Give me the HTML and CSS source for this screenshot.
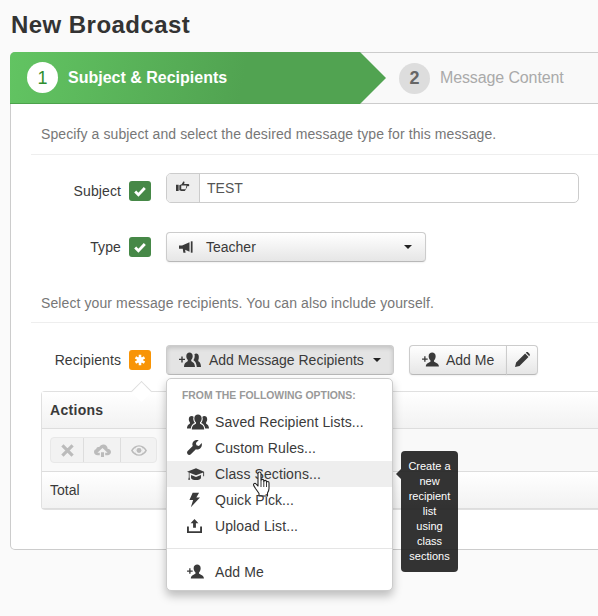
FILE: index.html
```html
<!DOCTYPE html>
<html lang="en">
<head>
<meta charset="utf-8">
<title>New Broadcast</title>
<link rel="stylesheet" href="styles.css">
</head>
<body>
<svg class="defs" width="0" height="0" aria-hidden="true">
  <symbol id="i-check" viewBox="0 0 16 16"><path d="M2.500 8.500l3.700 3.700 7.300-7.600" fill="none" stroke="currentColor" stroke-width="3.200"/></symbol>
  <symbol id="i-star" viewBox="0 0 16 16"><g stroke="currentColor" stroke-width="3.400"><path d="M8 1v14M2 4.500l12 7M14 4.500l-12 7"/></g><circle cx="8" cy="8" r="4" fill="currentColor"/></symbol>
  <symbol id="i-hand" viewBox="0 0 16 16"><path d="M0 5.500h3v7H0zM3.800 6l2.700-1.200L8 2.300c.7-.9 1.800-.4 1.700.7L9.200 4.600h4.800c1.600 0 1.600 2.600 0 2.600h-1.500c.5 1.200-.1 1.800-.7 2 .2 1-.3 1.700-1 1.800 0 1.100-.8 1.600-1.700 1.600H7c-1.300 0-2-.8-3.200-.9z" fill="currentColor"/><path d="M6 6.400h6l-1 4.200H6z" fill="#f0f0f0"/></symbol>
  <symbol id="i-horn" viewBox="0 0 16 16"><path d="M0 6.200h3.500L12 2.500v11L7 11.200l.5 3.300H5L4.300 10H0z" fill="currentColor"/><path d="M13.500 1.500h2v13h-2z" fill="currentColor"/></symbol>
  <symbol id="i-caret" viewBox="0 0 8 4"><path d="M0 0h8L4 4z" fill="currentColor"/></symbol>
  <symbol id="i-group" viewBox="0 0 22 16"><g fill="currentColor"><path d="M7.300 4.200C7.300 1.700 9 .4 11 .4s3.700 1.300 3.700 3.800c0 1.900-.7 3.400-1.700 4.100v1.200c0 .7 4.200 1 4.200 5.900H4.800c0-4.900 4.200-5.200 4.200-5.900V8.300c-1-.7-1.700-2.200-1.700-4.100z"/><path d="M1.800 5.300C1.800 3.200 3.100 2.100 4.700 2.100c.9 0 1.500.3 2 .8-.3.500-.4 1-.4 1.500 0 1.700.6 3.500 1.500 4.300 0 .5-3.400 1.100-4 5.800H0c0-3.900 2.900-4.400 2.900-5V8.400c-.6-.6-1.100-1.700-1.100-3.100z"/><path d="M20.200 5.300c0-2.100-1.300-3.200-2.900-3.200-.9 0-1.500.3-2 .8.300.5.400 1 .4 1.500 0 1.700-.6 3.500-1.500 4.300 0 .5 3.400 1.100 4 5.800H22c0-3.900-2.900-4.400-2.900-5V8.400c.6-.6 1.100-1.700 1.100-3.100z"/></g></symbol>
  <symbol id="i-group-add" viewBox="0 0 22 16"><g fill="currentColor"><path d="M0 6.700h2.300V4.400h1.400v2.300H6v1.400H3.700v2.300H2.300V8.100H0z"/><path d="M7.300 3.900C7.300 1.600 8.800.4 10.500.4s3.200 1.200 3.200 3.500c0 1.800-.6 3.200-1.500 3.900v1.100c0 .7 3.800 1 3.800 6.100H5c0-5.100 3.800-5.400 3.800-6.100V7.800c-.9-.7-1.500-2.100-1.500-3.900z"/><path d="M19.800 4.500c0-2-1.200-3-2.600-3-.8 0-1.300.2-1.800.7.200.5.300 1 .3 1.600 0 1.800-.5 3.400-1.300 4.100 0 .5 2.900 1.200 3.400 7h4.200c0-4.800-2.700-5.200-2.700-5.800V8c.5-.7.500-2 .5-3.500z"/></g></symbol>
  <symbol id="i-user-add" viewBox="0 0 18 16"><g fill="currentColor"><path d="M0 6.800h2.300V4.500h1.400v2.300H6v1.400H3.700v2.300H2.300V8.200H0z"/><path d="M7 4.500C7 1.800 8.800.5 10.800.5s3.700 1.300 3.700 4c0 2-.8 3.800-1.800 4.500v1.200c0 .9 5.300 1.300 5.300 5.300H4c0-4 5-4.400 5-5.300V9C8 8.300 7 6.500 7 4.500z"/></g></symbol>
  <symbol id="i-pencil" viewBox="0 0 16 16"><path d="M0 16l1.200-4.800L10.800 1.600l3.600 3.600-9.600 9.600zM11.800.6c.7-.7 1.700-.7 2.300 0l1.300 1.300c.6.600.6 1.600 0 2.300l-.2.200-3.600-3.600z" fill="currentColor"/></symbol>
  <symbol id="i-x" viewBox="0 0 14 14"><path d="M1.500 1.500l11 11M12.500 1.500l-11 11" stroke="currentColor" stroke-width="3.400" fill="none"/></symbol>
  <symbol id="i-cloud" viewBox="0 0 20 15"><path d="M4 13C1.800 13 0 11.300 0 9.200 0 7.500 1 6.200 2.600 5.700 3 3.700 4.800 3 6.200 3.500 7.200 1.300 9 .3 11 .3c3 0 5 2.300 5 5 2.300.1 4 1.800 4 3.900 0 2.100-1.800 3.800-4 3.800h-2.800v-3H16l-6-5.500-6 5.500h2.800v3zM8.200 9.500h3.600V15H8.200z" fill="currentColor"/></symbol>
  <symbol id="i-eye" viewBox="0 0 18 12"><path fill-rule="evenodd" d="M9 0c4 0 7.300 2.500 9 6-1.700 3.500-5 6-9 6s-7.300-2.500-9-6c1.700-3.500 5-6 9-6zM9 1.500a4.500 4.500 0 1 0 0 9 4.500 4.500 0 0 0 0-9zM2 6c.8 1.300 1.800 2.300 3 3C4.300 8 4.300 4 5 3 3.800 3.700 2.800 4.700 2 6zm14 0c-.8-1.300-1.800-2.300-3-3 .7 1 .7 5 0 6 1.200-.7 2.200-1.700 3-3z" fill="currentColor"/><circle cx="9" cy="6" r="2.800" fill="currentColor"/></symbol>
  <symbol id="i-wrench" viewBox="0 0 16 16"><path d="M15.700 3.300l-3 3-2.600-.6-.6-2.600 3-3C9.400-.7 6.300.8 5.800 3.600c-.2 1-.1 1.900.3 2.800L.7 11.800c-.9.900-.9 2.400 0 3.400.9.900 2.500.9 3.400 0l5.400-5.400c3.800 1.300 7.200-2.500 6.200-6.500z" fill="currentColor"/></symbol>
  <symbol id="i-cap" viewBox="0 0 20 15"><g fill="currentColor"><path d="M10 1L0 5l10 4 8-3.200V10h1V5z"/><path d="M4.500 8.500V12c0 1.200 2.500 2.300 5.500 2.300s5.500-1.100 5.500-2.300V8.500L10 10.700z"/><path d="M2 5.500h.8V11l.7 3H1.300L2 11z"/></g></symbol>
  <symbol id="i-bolt" viewBox="0 0 12 16"><path d="M4 0h7L8 5.200h4L2 16l2.500-8H.5z" fill="currentColor"/></symbol>
  <symbol id="i-upload" viewBox="0 0 16 16"><g fill="currentColor"><path d="M8 1l4.200 4.500H9.500v5h-3v-5H3.800z"/><path d="M0 9h2v5h12V9h2v7H0z"/></g></symbol>
</svg>

<main class="page">
  <h1 class="title">New Broadcast</h1>
  <section class="card">
    <div class="steps">
      <div class="step step-active"><span class="num num-active">1</span><span class="step-label">Subject &amp; Recipients</span></div>
      <div class="step step-next"><span class="num num-next">2</span><span class="step-label-next">Message Content</span></div>
    </div>

    <p class="hint">Specify a subject and select the desired message type for this message.</p>

    <div class="row row-subject">
      <span class="label">Subject</span>
      <span class="badge badge-ok"><svg class="ico-badge"><use href="#i-check"/></svg></span>
      <div class="input">
        <span class="addon"><svg class="ico-14"><use href="#i-hand"/></svg></span>
        <span class="value">TEST</span>
      </div>
    </div>

    <div class="row row-type">
      <span class="label">Type</span>
      <span class="badge badge-ok"><svg class="ico-badge"><use href="#i-check"/></svg></span>
      <div class="btn select">
        <svg class="ico-14 horn"><use href="#i-horn"/></svg>
        <span class="select-text">Teacher</span>
        <svg class="caret"><use href="#i-caret"/></svg>
      </div>
    </div>

    <p class="hint hint-2">Select your message recipients. You can also include yourself.</p>

    <div class="row row-rec">
      <span class="label">Recipients</span>
      <span class="badge badge-warn"><svg class="ico-star"><use href="#i-star"/></svg></span>
      <div class="add-wrap">
        <div class="btn btn-open">
          <svg class="ico-group-add"><use href="#i-group-add"/></svg>
          <span class="open-text">Add Message Recipients</span>
          <svg class="caret"><use href="#i-caret"/></svg>
        </div>
        <div class="menu">
          <div class="menu-head">FROM THE FOLLOWING OPTIONS:</div>
          <div class="menu-item"><span class="mi"><svg class="ico-group"><use href="#i-group"/></svg></span>Saved Recipient Lists...</div>
          <div class="menu-item"><span class="mi"><svg class="ico-15"><use href="#i-wrench"/></svg></span>Custom Rules...</div>
          <div class="menu-item menu-hover"><span class="mi"><svg class="ico-cap"><use href="#i-cap"/></svg></span>Class Sections...
            <div class="tip">Create a<br>new<br>recipient<br>list<br>using<br>class<br>sections</div>
            <svg class="cursor" viewBox="0 0 19 26"><path d="M5 2.500c0-2 3-2 3 0v7c0-1.500 2.800-1.500 2.800 0v1c0-1.500 2.700-1.500 2.700 0v1c.3-1.300 2.500-1.300 2.500.2v5.800c0 2-.8 3.200-1.500 4.500v3H6v-2.500C5 21 4 19.500 2.500 17.500L.8 14.600c-.9-1.600 1-3 2.300-1.600L5 15z" fill="#fff" stroke="#222" stroke-width="1.100" stroke-linejoin="round"/><path d="M8 10v6M10.800 10.500V16M13.500 11.500V16" stroke="#222" stroke-width=".9"/></svg>
          </div>
          <div class="menu-item"><span class="mi"><svg class="ico-bolt"><use href="#i-bolt"/></svg></span>Quick Pick...</div>
          <div class="menu-item"><span class="mi"><svg class="ico-15"><use href="#i-upload"/></svg></span>Upload List...</div>
          <div class="menu-sep"></div>
          <div class="menu-item"><span class="mi"><svg class="ico-user"><use href="#i-user-add"/></svg></span>Add Me</div>
        </div>
      </div>
      <div class="btn-group">
        <div class="btn btn-me"><svg class="ico-user"><use href="#i-user-add"/></svg><span>Add Me</span></div>
        <div class="btn btn-edit"><svg class="ico-15"><use href="#i-pencil"/></svg></div>
      </div>
    </div>

    <div class="table">
      <span class="notch"></span>
      <div class="t-head">Actions</div>
      <div class="t-actions">
        <div class="tools">
          <span class="tool tool-x"><svg class="ico-13"><use href="#i-x"/></svg></span>
          <span class="tool tool-c"><svg class="ico-cloud"><use href="#i-cloud"/></svg></span>
          <span class="tool tool-e"><svg class="ico-eye"><use href="#i-eye"/></svg></span>
        </div>
      </div>
      <div class="t-total">Total</div>
    </div>
  </section>
</main>
</body>
</html>
```

FILE: styles.css
```css
* { box-sizing: border-box; }
html, body { margin: 0; height: 616px; overflow: hidden; }
body {
  background: #fafafa;
  color: #3a3a3a;
  font: 14px/20px "Liberation Sans", Arial, sans-serif;
}
.defs { position: absolute; }
svg { display: block; flex: none; }

.page { width: 620px; padding-left: 10px; }
.title {
  margin: 0;
  padding: 10px 0 0 1px;
  height: 52px;
  font-size: 24px;
  line-height: 29px;
  font-weight: bold;
  letter-spacing: .45px;
  color: #333;
}

.card {
  width: 610px;
  height: 498px;
  background: #fff;
  border: 1px solid #ccc;
  border-top: 0;
  border-radius: 5px;
}

.steps {
  display: flex;
  height: 52px;
  margin-left: -1px;
  background: #f9f9f9;
  border-top: 1px solid #ccc;
  border-bottom: 1px solid #ccc;
  border-radius: 5px 0 0 0;
  position: relative;
}
.step { display: flex; align-items: center; }
.step-active {
  width: 376px;
  height: 52px;
  margin-top: -1px;
  padding-left: 17px;
  background: linear-gradient(100deg, #62c462 0%, #51a351 62%, #51a351 100%);
  clip-path: polygon(0 0, 350px 0, 100% 50%, 350px 100%, 0 100%);
  border-radius: 5px 0 0 0;
  border-bottom: 1px solid #4ca24c;
}
.step-next { padding-left: 13px; }
.num {
  width: 31px;
  height: 31px;
  border-radius: 50%;
  display: flex;
  align-items: center;
  justify-content: center;
  font-size: 18px;
}
.num-active { background: #fff; color: #2f8f2f; }
.num-next { background: #ddd; color: #666; font-weight: bold; }
.step-label { margin-left: 10px; font-size: 16px; font-weight: bold; color: #fff; }
.step-label-next { margin-left: 10px; font-size: 16px; letter-spacing: -.12px; color: #aaa; }

.hint {
  margin: 0 0 0 20px;
  padding: 20px 0 10px 10px;
  height: 51px;
  color: #777;
  letter-spacing: .1px;
  border-bottom: 1px solid #eee;
}
.hint-2 { margin-top: 11px; height: 50px; padding-top: 20px; }

.row { display: flex; align-items: center; }
.row-subject { margin-top: 17px; height: 31px; }
.row-type { margin-top: 28px; height: 31px; }
.row-rec { margin-top: 21px; height: 31px; }

.label { width: 110px; text-align: right; flex: none; letter-spacing: .1px; }
.row-subject .label { padding-top: 6px; }
.badge {
  width: 22px;
  height: 20px;
  margin: 0 15px 0 8px;
  flex: none;
  display: flex;
  align-items: center;
  justify-content: center;
  border-radius: 3px;
  color: #fff;
}
.row-subject .badge { margin-top: 6px; }
.row-type .badge { margin-top: 0; }
.badge-ok { background: #468847; }
.badge-warn { background: #f89406; }
.ico-badge { width: 14px; height: 14px; }
.ico-star { width: 12px; height: 12px; }

.input {
  width: 413px;
  height: 30px;
  display: flex;
  background: #fff;
  border: 1px solid #ccc;
  border-radius: 5px;
}
.addon {
  width: 33px;
  flex: none;
  display: flex;
  align-items: center;
  justify-content: center;
  background: #eee;
  border-right: 1px solid #ccc;
  border-radius: 4px 0 0 4px;
  padding-bottom: 2px;
}
.value { padding: 4px 0 0 7px; color: #555; }
.ico-14 { width: 14px; height: 14px; }

.btn {
  height: 30px;
  display: flex;
  align-items: center;
  background: linear-gradient(#fff, #e6e6e6);
  border: 1px solid #ccc;
  border-bottom-color: #b8b8b8;
  border-radius: 4px;
  color: #3a3a3a;
  box-shadow: 0 1px 2px rgba(0, 0, 0, .06);
}
.select { width: 260px; padding: 0 13px 0 12px; }
.horn { margin-right: 13px; }
.select-text { flex: 1; }
.caret { width: 8px; height: 4px; color: #222; }

.add-wrap { position: relative; flex: none; }
.btn-open {
  width: 228px;
  padding: 0 12px;
  background: #e4e4e4;
  box-shadow: inset 0 2px 4px rgba(0, 0, 0, .15);
}
.open-text { flex: 1; margin-left: 8px; }
.ico-group-add { width: 22px; height: 16px; }
.ico-group { width: 22px; height: 16px; }

.menu {
  position: absolute;
  z-index: 5;
  top: 33px;
  left: 0;
  width: 227px;
  height: 213px;
  padding-top: 8px;
  background: #fff;
  border: 1px solid #ccc;
  border-radius: 5px;
  box-shadow: 0 5px 10px rgba(0, 0, 0, .25);
}
.menu-head {
  padding-left: 15px;
  height: 22px;
  font-size: 10.4px;
  line-height: 18px;
  font-weight: bold;
  color: #999;
}
.menu-item {
  position: relative;
  height: 26px;
  display: flex;
  align-items: center;
  padding-left: 20px;
  letter-spacing: .1px;
  color: #3a3a3a;
}
.mi { width: 28px; flex: none; display: flex; justify-content: flex-start; }
.menu-hover { background: #eee; }
.menu-sep { height: 1px; margin: 9px 0 10px; background: #e5e5e5; }
.ico-15 { width: 15px; height: 15px; }
.ico-cap { width: 18px; height: 14px; }
.ico-bolt { width: 11px; height: 16px; margin-left: 2px; }
.ico-user { width: 17px; height: 15px; }

.tip {
  position: absolute;
  left: 234px;
  top: -10px;
  width: 57px;
  padding: 8px 4px;
  background: rgba(34, 34, 34, .92);
  border-radius: 4px;
  color: #fff;
  font-size: 11px;
  line-height: 15px;
  text-align: center;
  letter-spacing: 0;
}
.tip::before {
  content: "";
  position: absolute;
  left: -5px;
  top: 18px;
  border-right: 5px solid rgba(34, 34, 34, .92);
  border-top: 5px solid transparent;
  border-bottom: 5px solid transparent;
}
.cursor { position: absolute; left: 86px; top: 10px; width: 19px; height: 26px; }

.btn-group { display: flex; margin-left: 15px; flex: none; }
.btn-me { width: 98px; padding-left: 12px; border-radius: 4px 0 0 4px; gap: 7px; }
.btn-edit { width: 32px; margin-left: -1px; justify-content: center; border-radius: 0 4px 4px 0; }

.table {
  position: relative;
  margin: 16px 0 0 30px;
  border: 1px solid #e0e0e0;
  border-right: 0;
  border-radius: 4px 0 0 4px;
}
.notch {
  position: absolute;
  left: 92px;
  top: -8px;
  width: 15px;
  height: 15px;
  background: #fff;
  border-top: 1px solid #ddd;
  border-left: 1px solid #ddd;
  transform: rotate(45deg);
}
.t-head {
  height: 37px;
  padding: 8px 0 0 8px;
  font-weight: bold;
  letter-spacing: .3px;
  background: linear-gradient(#fff, #f2f2f2);
  border-bottom: 1px solid #ddd;
}
.t-actions {
  height: 43px;
  padding: 8px 0 0 8px;
  background: #f9f9f9;
  border-bottom: 1px solid #ddd;
}
.tools {
  width: 107px;
  height: 26px;
  display: flex;
  background: #f2f2f2;
  border: 1px solid #e8e8e8;
  border-radius: 4px;
  color: #bbb;
}
.tool { display: flex; align-items: center; justify-content: center; }
.tool-x { width: 33px; border-right: 1px solid #ddd; }
.tool-c { width: 37px; border-right: 1px solid #ddd; }
.tool-e { width: 35px; }
.ico-13 { width: 13px; height: 13px; }
.ico-cloud { width: 17px; height: 13px; }
.ico-eye { width: 16px; height: 11px; }
.t-total {
  height: 37px;
  padding: 8px 0 0 8px;
  background: linear-gradient(#fff, #f2f2f2);
  border-bottom: 1px solid #ddd;
}
```
